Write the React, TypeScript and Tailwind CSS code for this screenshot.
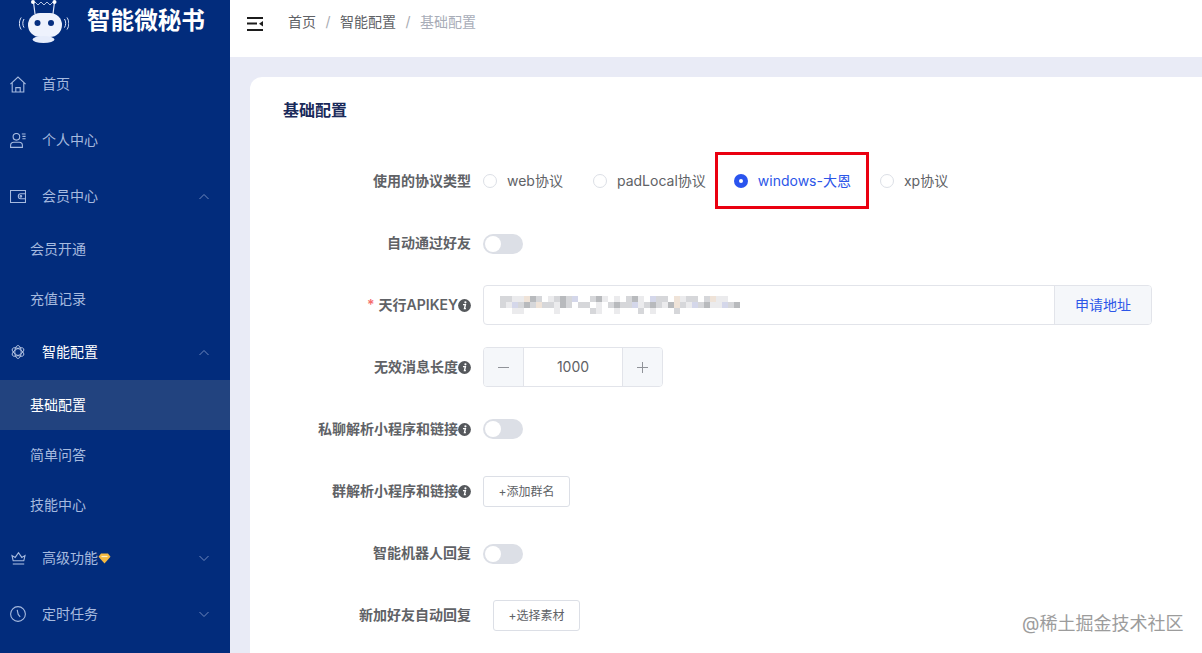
import type { ReactNode } from 'react';

const FONT = "font-['Inter','Noto_Sans_CJK_SC',sans-serif]";

// menu icons, hand drawn to follow the reference strokes
const HomeIcon = () => (
  <svg width="16" height="17" viewBox="0 0 16 17" fill="none" stroke="currentColor" strokeWidth="1.100">
    <path d="M.4 8.200 8 1l7.600 7.200M2.200 6.600V16h11.600V6.600" />
    <path d="M5.800 16v-4.400h4.400V16" />
  </svg>
);
const UserIcon = () => (
  <svg width="16" height="15" viewBox="0 0 16 15" fill="none" stroke="currentColor" strokeWidth="1.100">
    <circle cx="6.400" cy="3.800" r="3.300" />
    <path d="M.6 14.400v-2c0-1.800 1.400-3.200 3.200-3.200h5.400c1.800 0 3.200 1.400 3.200 3.200v2z" />
    <path d="M11.800 1h3.800M12.400 3.400h3.200M12.400 5.800h3.200" />
  </svg>
);
const WalletIcon = () => (
  <svg width="16" height="13" viewBox="0 0 16 13" fill="none" stroke="currentColor" strokeWidth="1.100">
    <path d="M.5.500h15v12H.5z" />
    <path d="M15.500 3.800H10.800a2.500 2.500 0 0 0 0 5h4.700" />
    <circle cx="10.900" cy="6.300" r=".8" />
  </svg>
);
const AtomIcon = () => (
  <svg width="14" height="14" viewBox="0 0 14 14" fill="none" stroke="#c9d5ee" strokeWidth=".8">
    <ellipse cx="7" cy="7" rx="3.200" ry="6.500" />
    <ellipse cx="7" cy="7" rx="3.200" ry="6.500" transform="rotate(60 7 7)" />
    <ellipse cx="7" cy="7" rx="3.200" ry="6.500" transform="rotate(120 7 7)" />
  </svg>
);
const CrownIcon = () => (
  <svg width="15" height="14" viewBox="0 0 15 14" fill="none" stroke="currentColor" strokeWidth="1.100">
    <path d="M2.200 9.800 1 4.600l3.200 1.800L7.500 1.600l3.300 4.800L14 4.600l-1.200 5.200z" />
    <path d="M1.800 13h11.400" />
  </svg>
);
const ClockIcon = () => (
  <svg width="16" height="16" viewBox="0 0 16 16" fill="none" stroke="currentColor" strokeWidth="1.100">
    <circle cx="8" cy="8" r="7.400" />
    <path d="M7.200 3.800 8.200 8.400l2 2.400" />
  </svg>
);
const Chevron = ({ up }: { up?: boolean }) => (
  <svg width="12" height="7" viewBox="0 0 12 7" fill="none" stroke="currentColor" strokeWidth="1" className="text-[#6f88bd]">
    <path d={up ? 'M1.500 6 6 1.500 10.500 6' : 'M1.500 1 6 5.500 10.500 1'} />
  </svg>
);
const Gem = () => (
  <svg width="13" height="11" viewBox="0 0 13 11" className="shrink-0">
    <path d="M3 .5h7l2.500 3.200L6.500 10.500.5 3.700z" fill="#f5b942" />
    <path d="M3.500 3.500h6" stroke="#fff0c4" strokeWidth="1.200" />
  </svg>
);
const InfoDot = () => (
  <svg width="13" height="13" viewBox="0 0 13 13" className="shrink-0">
    <circle cx="6.500" cy="6.500" r="6.400" fill="#55585c" />
    <circle cx="7.400" cy="3.300" r="1.100" fill="#fff" />
    <path d="M5 5.600h2.400L6.500 9.600h1.400" stroke="#fff" strokeWidth="1.400" fill="none" />
  </svg>
);

const RobotLogo = () => (
  <svg width="50" height="44" viewBox="0 0 50 44" fill="none">
    <path d="M14.500 2 16 14M35.500 2 34 14" stroke="#dfe7fb" strokeWidth="1.200" />
    <circle cx="14" cy="2" r="2" fill="#fff" />
    <circle cx="35.500" cy="2" r="2" fill="#fff" />
    <path d="M16 2l3 3 3-3 3 3 3-3 3 3 3-3" stroke="#dfe7fb" strokeWidth=".8" />
    <rect x="9" y="13" width="34" height="24" rx="12" fill="#eef2fd" />
    <circle cx="18.500" cy="23" r="3" fill="#062f80" />
    <circle cx="32" cy="23" r="3" fill="#062f80" />
    <ellipse cx="24.500" cy="39.500" rx="11" ry="3.500" fill="#e6ecfb" />
    <path d="M5 19c-1.600 2.600-1.600 6 0 8.600M2.200 17.500c-2.400 3.600-2.400 8.400 0 12M45.500 19c1.600 2.600 1.600 6 0 8.600M48 17.500c2.400 3.600 2.400 8.400 0 12" stroke="#dfe7fb" strokeWidth="1" />
  </svg>
);

const HamburgerIcon = () => (
  <svg width="16" height="14" viewBox="0 0 16 14" className="ml-[17px] mt-[17px] shrink-0" fill="#1c1c1c">
    <path d="M0 0h16v2H0zM0 5.500h10v2H0zM0 12h16v2H0zM16 4v5.500l-4-2.750z" />
  </svg>
);

const MenuItem = ({ icon, label, active, open, arrow, extra }: { icon: ReactNode; label: string; active?: boolean; open?: boolean; arrow?: boolean; extra?: ReactNode }) => (
  <div className={`h-14 flex items-center pl-[10px] pr-[20px] text-sm ${active ? 'text-white' : 'text-[#a6badf]'}`}>
    <span className="w-4 flex justify-center shrink-0">{icon}</span>
    <span className="ml-4">{label}</span>
    {extra}
    {arrow && <span className="ml-auto flex"><Chevron up={open} /></span>}
  </div>
);

const SubItem = ({ label, active }: { label: string; active?: boolean }) => (
  <div className={`h-[50px] flex items-center pl-[30px] text-sm ${active ? 'bg-[#22437f] text-white' : 'text-[#a6badf]'}`}>{label}</div>
);

const Sidebar = () => (
  <aside className="w-[230px] shrink-0 bg-[#022c7c] flex flex-col overflow-hidden">
    <div className="h-14 shrink-0 flex items-start pl-[19px]">
      <RobotLogo />
      <span className="ml-[18px] text-[23.6px] leading-[41px] font-bold text-white">智能微秘书</span>
    </div>
    <MenuItem icon={<HomeIcon />} label="首页" />
    <MenuItem icon={<UserIcon />} label="个人中心" />
    <MenuItem icon={<WalletIcon />} label="会员中心" arrow open />
    <SubItem label="会员开通" />
    <SubItem label="充值记录" />
    <MenuItem icon={<AtomIcon />} label="智能配置" arrow open active />
    <SubItem label="基础配置" active />
    <SubItem label="简单问答" />
    <SubItem label="技能中心" />
    <MenuItem icon={<CrownIcon />} label="高级功能" arrow extra={<Gem />} />
    <MenuItem icon={<ClockIcon />} label="定时任务" arrow />
  </aside>
);

const Header = () => (
  <header className="h-[57px] shrink-0 bg-white flex items-start">
    <HamburgerIcon />
    <nav className="ml-[25px] h-[43px] flex items-center text-[14px] text-[#606266]">
      <span>首页</span>
      <span className="w-6 text-center text-[#a8abb2]">/</span>
      <span>智能配置</span>
      <span className="w-6 text-center text-[#a8abb2]">/</span>
      <span className="text-[#a8adb8]">基础配置</span>
    </nav>
  </header>
);

const Row = ({ label, required, info, children }: { label: string; required?: boolean; info?: boolean; children: ReactNode }) => (
  <div className="h-[62px] flex items-center">
    <div className="w-[221px] shrink-0 flex items-center justify-end text-sm font-semibold text-[#606266]">
      {required && <span className="text-[#f56c6c] mr-1">*</span>}
      <span>{label}</span>
      {info && <InfoDot />}
    </div>
    <div className="ml-3 flex-1 flex items-center">{children}</div>
  </div>
);

const Radio = ({ label, checked, className }: { label: string; checked?: boolean; className?: string }) => (
  <label className={`flex items-center text-sm ${checked ? 'text-[#2c56e8]' : 'text-[#606266]'} ${className ?? ''}`}>
    {checked ? (
      <span className="w-[14px] h-[14px] rounded-full bg-[#2a54ee] flex items-center justify-center">
        <span className="w-1 h-1 rounded-full bg-white" />
      </span>
    ) : (
      <span className="w-[14px] h-[14px] rounded-full border border-[#dcdfe6] bg-white" />
    )}
    <span className="ml-[10px]">{label}</span>
  </label>
);

const Toggle = ({ className }: { className?: string }) => (
  <span className={`w-10 h-5 rounded-full bg-[#dcdfe6] p-[2px] flex ${className ?? ''}`}>
    <span className="w-4 h-4 rounded-full bg-white" />
  </span>
);

const SmallButton = ({ label, className }: { label: string; className?: string }) => (
  <button className={`h-[31px] w-[87px] mt-px rounded-[3px] border border-[#dcdfe6] bg-white text-xs text-[#606266] ${className ?? ''}`}>{label}</button>
);

// mosaic over the masked key, one string per row of 6px cells
const MOSAIC = [
  'bbaacBb.abBbC..bBa.a.bBa.Cbb.cabb.bcaa..',
  'baCbBbcbbaBb.bb.a.bBbbCabBbaBcbaCbBaaCbB',
  '..aa.....a.....ba..a...b.a...b..........',
];
const MOSAIC_COLORS: Record<string, string> = {
  '.': 'transparent',
  a: '#ebebed',
  b: '#d6d7da',
  c: '#efe3d8',
  B: '#b8babd',
  C: '#d4d7ea',
};

const Mosaic = () => (
  <div className="flex flex-col blur-[0.5px]">
    {MOSAIC.map((row, i) => (
      <div key={i} className="flex h-[6px]">
        {row.split('').map((c, j) => (
          <span key={j} className="w-[6px] h-[6px]" style={{ background: MOSAIC_COLORS[c] }} />
        ))}
      </div>
    ))}
  </div>
);

const StepLine = ({ plus }: { plus?: boolean }) => (
  <svg width="11" height="11" viewBox="0 0 11 11" stroke="#909399" strokeWidth="1">
    <path d={plus ? 'M0 5.500h11M5.500 0v11' : 'M0 5.500h11'} />
  </svg>
);

const Form = () => (
  <div className="flex flex-col mt-[29px]">
    <Row label="使用的协议类型">
      <Radio label="web协议" />
      <Radio label="padLocal协议" className="ml-[30px]" />
      <Radio label="windows-大恩" checked className="ml-[28px]" />
      <Radio label="xp协议" className="ml-[29px]" />
    </Row>
    <Row label="自动通过好友"><Toggle className="mt-[2px]" /></Row>
    <Row label="天行APIKEY" required info>
      <div className="w-[669px] h-10 flex rounded border border-[#e2e4ea] overflow-hidden">
        <div className="flex-1 flex items-center pl-4"><Mosaic /></div>
        <div className="w-[97px] border-l border-[#e2e4ea] bg-[#f5f7fa] flex items-center justify-center text-sm text-[#2c56e8]">申请地址</div>
      </div>
    </Row>
    <Row label="无效消息长度" info>
      <div className="w-[180px] h-10 flex rounded border border-[#e2e4ea] overflow-hidden text-sm text-[#606266]">
        <span className="w-10 bg-[#f5f7fa] border-r border-[#e2e4ea] flex items-center justify-center"><StepLine /></span>
        <span className="flex-1 flex items-center justify-center">1000</span>
        <span className="w-10 bg-[#f5f7fa] border-l border-[#e2e4ea] flex items-center justify-center"><StepLine plus /></span>
      </div>
    </Row>
    <Row label="私聊解析小程序和链接" info><Toggle /></Row>
    <Row label="群解析小程序和链接" info><SmallButton label="+添加群名" /></Row>
    <Row label="智能机器人回复"><Toggle className="mt-[2px]" /></Row>
    <Row label="新加好友自动回复"><SmallButton label="+选择素材" className="ml-[10px]" /></Row>
  </div>
);

export default function App() {
  return (
    <div className={`relative w-[1202px] h-[653px] flex overflow-hidden bg-[#e9ebf6] ${FONT}`}>
      <Sidebar />
      <main className="flex-1 min-w-0 flex flex-col">
        <Header />
        <div className="flex-1 min-h-0 pl-5 pt-5">
          <section className="h-[700px] bg-white rounded-tl-xl pl-[33px] pt-[22px]">
            <h2 className="text-base leading-[22px] font-semibold text-[#1a2a5a]">基础配置</h2>
            <div className="-ml-[33px]"><Form /></div>
          </section>
        </div>
      </main>
      {/* red annotation box drawn on the screenshot */}
      <div className="absolute left-[715px] top-[152px] w-[154px] h-[57px] border-[3px] border-[#ea0010] pointer-events-none" />
      <span className="absolute left-[1022px] top-[612px] text-lg leading-6 text-[#9c9c9c] [text-shadow:0_0_2px_#fff]">@稀土掘金技术社区</span>
    </div>
  );
}
